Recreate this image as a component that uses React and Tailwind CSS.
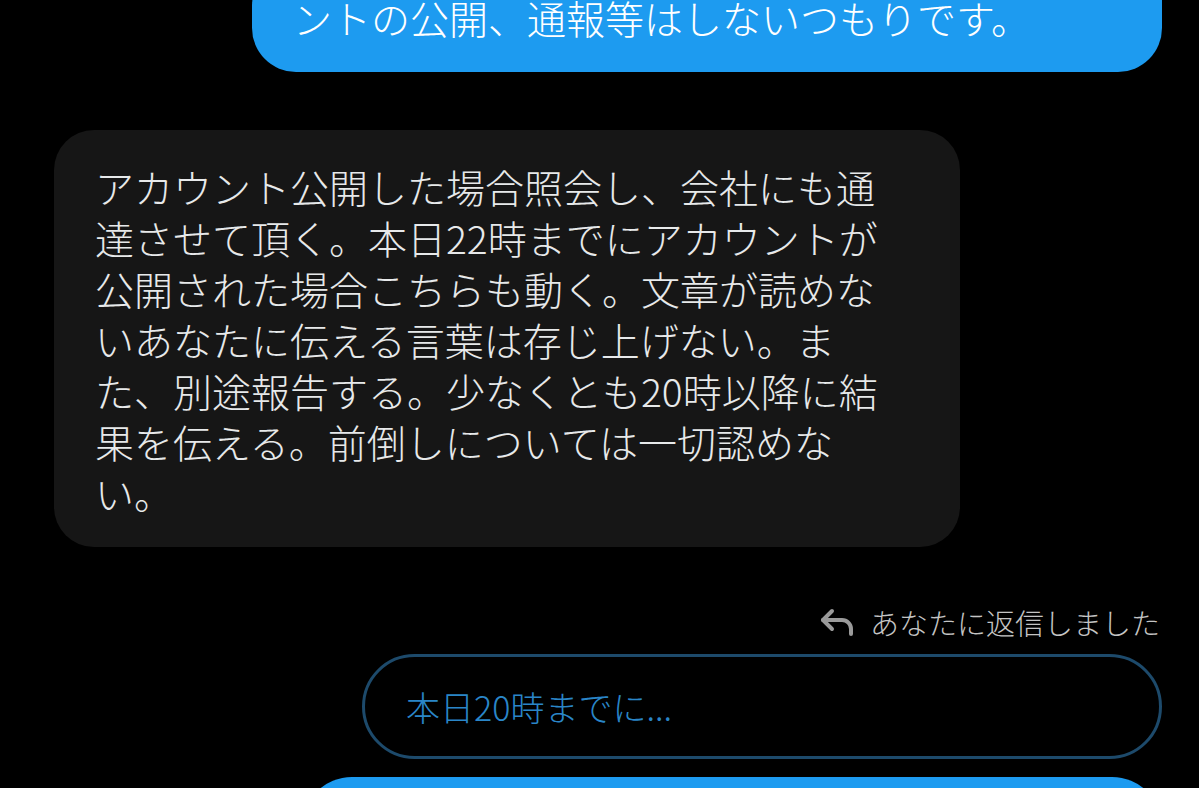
import React from "react";

const FONT = { fontFamily: '"Noto Sans CJK JP", "Noto Sans", sans-serif' };

const received = [
  "アカウント公開した場合照会し、会社にも通",
  "達させて頂く。本日22時までにアカウントが",
  "公開された場合こちらも動く。文章が読めな",
  "いあなたに伝える言葉は存じ上げない。ま",
  "た、別途報告する。少なくとも20時以降に結",
  "果を伝える。前倒しについては一切認めな",
  "い。",
];

const ReplyIcon = () => (
  <svg width="36" height="30" viewBox="0 0 36 30" fill="none" stroke="#9a9a9a" strokeWidth="4" strokeLinecap="round" strokeLinejoin="round">
    <polyline points="12,4 3,13 12,22" />
    <path d="M3 13h19a9 9 0 0 1 9 9v5" />
  </svg>
);

export default function App() {
  return (
    <div className="w-full h-[788px] bg-black overflow-hidden flex flex-col font-light" style={FONT}>
      {/* sent bubble, scrolled off the top */}
      <div className="shrink-0 self-end mr-[37px] mt-[-38px] w-[910px] bg-[#1d9bf0] rounded-[44px] rounded-tr-[10px] pl-[41px] pt-[30px] pb-[29px] text-white text-[39px] leading-[51px] whitespace-nowrap">
        ントの公開、通報等はしないつもりです。
      </div>

      {/* received bubble */}
      <div className="shrink-0 ml-[54px] mt-[58px] w-[906px] bg-[#161616] rounded-[40px] pl-[41px] pt-[31px] pb-[29px] text-[#e7e9ea] text-[39px] leading-[51px] whitespace-nowrap">
        {received.map((line) => (
          <div key={line}>{line}</div>
        ))}
      </div>

      {/* reply label */}
      <div className="shrink-0 self-end mr-[39px] mt-[55px] h-[40px] flex items-center gap-[14px] text-[#c4c4c4] text-[29px] leading-[40px]">
        <ReplyIcon />
        <span>あなたに返信しました</span>
      </div>

      {/* quoted message */}
      <div className="shrink-0 self-end mr-[37px] mt-[12px] w-[800px] h-[105px] rounded-full border-[3px] border-[#1d4a6b] pl-[41px] flex items-center text-[#2a86c8] text-[34px] whitespace-nowrap">
        本日20時までに...
      </div>

      {/* next sent bubble */}
      <div className="shrink-0 self-end mr-[37px] mt-[18px] w-[860px] h-[120px] bg-[#1d9bf0] rounded-[50px]" />
    </div>
  );
}
